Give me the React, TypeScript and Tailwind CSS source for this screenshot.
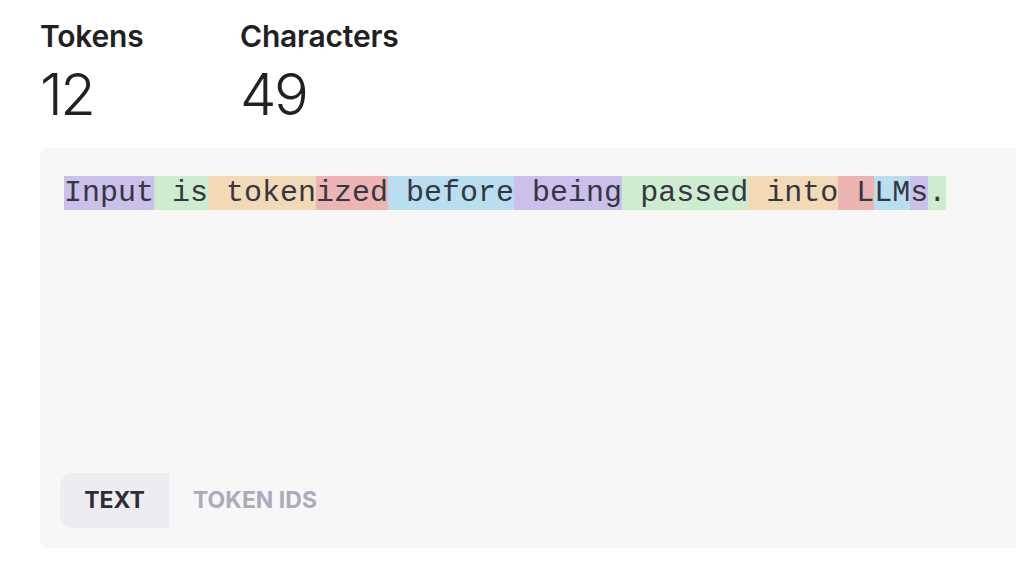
const tokens: { text: string; color: string }[] = [
  { text: 'Input', color: 'bg-[#cbc0eb]' },
  { text: ' is', color: 'bg-[#cdecd0]' },
  { text: ' token', color: 'bg-[#f3dab7]' },
  { text: 'ized', color: 'bg-[#edb4b4]' },
  { text: ' before', color: 'bg-[#b8def0]' },
  { text: ' being', color: 'bg-[#cbc0eb]' },
  { text: ' passed', color: 'bg-[#cdecd0]' },
  { text: ' into', color: 'bg-[#f3dab7]' },
  { text: ' L', color: 'bg-[#edb4b4]' },
  { text: 'LM', color: 'bg-[#b8def0]' },
  { text: 's', color: 'bg-[#cbc0eb]' },
  { text: '.', color: 'bg-[#cdecd0]' },
];

const Stat = ({ label, value }: { label: string; value: string }) => (
  <div className="flex w-[200px] flex-col">
    <div className="text-[30px] leading-[36px] font-semibold tracking-[-0.2px] text-[#202123]">{label}</div>
    <div className="mt-[10px] text-[58px] leading-[60px] font-light tracking-[-2.5px] text-[#202123]">{value}</div>
  </div>
);

const App = () => {
  return (
    <div className="h-[584px] w-[1016px] overflow-hidden bg-white pl-[40px] pt-[18px] font-['Inter','Liberation_Sans',sans-serif]">
      <div className="flex">
        <Stat label="Tokens" value="12" />
        <Stat label="Characters" value="49" />
      </div>
      <div className="mt-[24px] flex h-[400px] w-[1000px] flex-col justify-between rounded-[6px] bg-[#f7f7f7] pb-[20px] pl-[20px] pt-[27px]">
        <div className="pl-[4px] font-['Liberation_Mono','DejaVu_Sans_Mono',monospace] text-[30px] leading-[36px] whitespace-pre text-[#353740]">
          {tokens.map((t, i) => (
            <span key={i} className={t.color}>
              {t.text}
            </span>
          ))}
        </div>
        <div className="flex items-center">
          <button className="h-[55px] w-[109px] rounded-l-[14px] bg-[#ececf1] text-[23px] font-bold text-[#2d2e33]">
            TEXT
          </button>
          <button className="ml-[24px] h-[55px] text-[23px] font-bold text-[#acabbb]">TOKEN IDS</button>
        </div>
      </div>
    </div>
  );
};

export default App;
